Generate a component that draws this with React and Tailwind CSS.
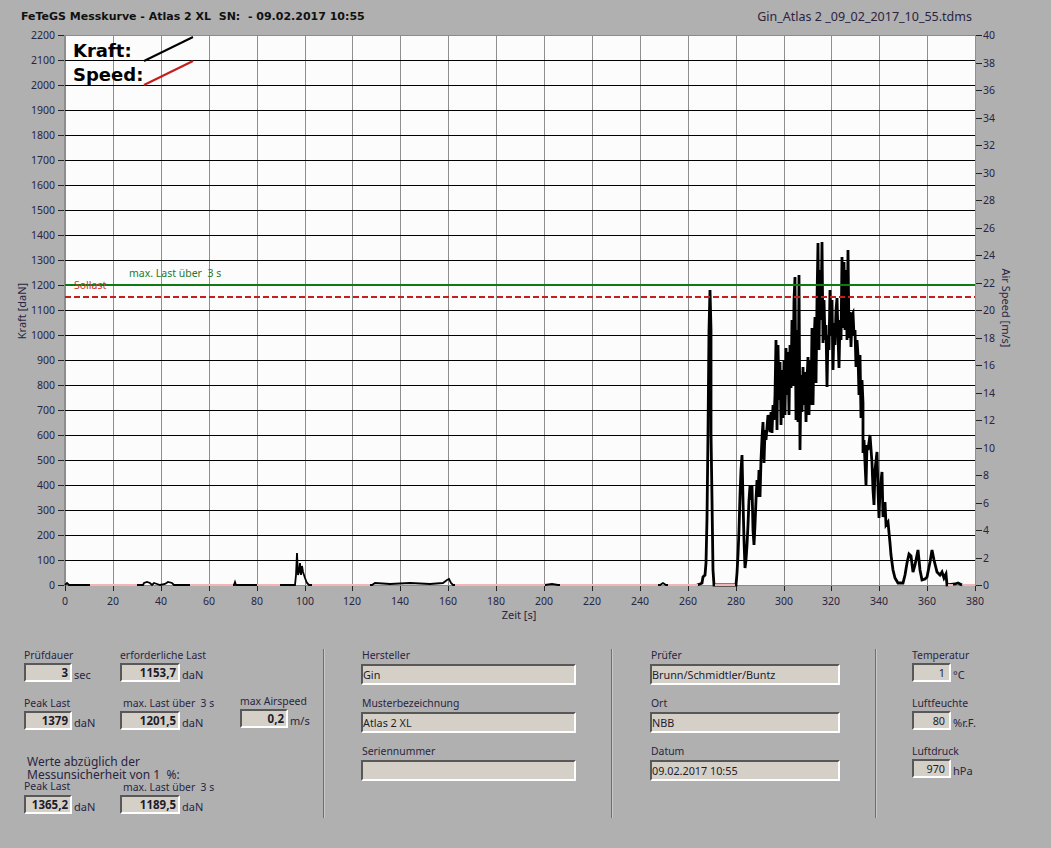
import React from 'react';

const X_LABELS = Array.from({ length: 20 }, (_, i) => i * 20);
const KRAFT_LABELS = Array.from({ length: 23 }, (_, i) => i * 100);
const SPEED_LABELS = Array.from({ length: 21 }, (_, i) => i * 2);

const xPos = (i) => Math.round(65 + i * 47.9);
const kraftY = (v) => 585 - v * 0.25;
const speedY = (v) => 585 - v * 13.75;

// traced from the measurement curve, in page pixels
const LOW_CURVE = [
  [65, 585], [67, 583], [69, 585], [143, 585], [144, 583], [147, 582], [150, 583], [152, 585], [154, 583], [157, 584], [160, 585],
  [165, 584], [168, 582], [172, 583], [174, 585], [234, 585], [235, 582], [236, 585], [295, 585], [296, 575], [297, 553], [298, 575],
  [299, 572], [300, 563], [301, 575], [302, 566], [303, 572], [305, 578], [307, 583], [309, 585], [372, 585], [375, 583], [390, 584],
  [410, 583], [430, 584], [443, 583], [447, 580], [449, 579], [451, 583], [453, 585], [545, 585], [552, 584], [558, 585], [660, 585], [663, 583],
  [666, 585], [697, 585],
];
const MAIN_CURVE = [
  [697, 585], [700, 584], [702, 583], [703, 577], [705, 575], [706, 563], [707, 518], [708, 433], [709, 330], [710, 290], [711, 330],
  [711, 433], [712, 500], [713, 570], [714, 585], [736, 585], [737, 573], [738, 555], [739, 530], [740, 495], [741, 470], [742, 455], [743, 500],
  [744, 540], [745, 568], [746, 560], [747, 545], [748, 525], [749, 500], [750, 486], [751, 500], [752, 486], [753, 530], [754, 545], [755, 525],
  [756, 500], [757, 480], [758, 497], [759, 470], [760, 497], [761, 460], [762, 438], [763, 422], [764, 463], [765, 430], [766, 440], [768, 415],
  [769, 425], [770, 432], [771, 412], [772, 433], [773, 405], [774, 420], [775, 395], [776, 340], [777, 430], [778, 345], [779, 400], [780, 362],
  [781, 425], [782, 370], [783, 418], [784, 360], [785, 415], [786, 348], [787, 395], [788, 352], [789, 415], [790, 345], [791, 388], [792, 320],
  [793, 385], [794, 300], [795, 277], [796, 420], [797, 330], [798, 422], [799, 275], [800, 450], [801, 375], [802, 412], [803, 367], [804, 405], [805, 372],
  [806, 422], [807, 380], [808, 357], [809, 415], [810, 360], [811, 405], [812, 328], [813, 405], [814, 345], [815, 317], [816, 383], [817, 300],
  [818, 243], [819, 350], [820, 270], [821, 320], [822, 242], [823, 343], [824, 300], [825, 340], [826, 325], [827, 387], [828, 335], [829, 350],
  [830, 290], [831, 335], [832, 300], [833, 370], [834, 323], [835, 345], [836, 310], [837, 298], [838, 335], [839, 368], [840, 320], [841, 340],
  [842, 257], [843, 328], [844, 262], [845, 330], [846, 270], [847, 340], [848, 250], [849, 338], [850, 312], [851, 347], [852, 315], [853, 313],
  [854, 335], [855, 330], [856, 367], [857, 340], [858, 355], [859, 395], [860, 355], [861, 418], [862, 380], [863, 403], [863, 453], [864, 440],
  [866, 485], [867, 445], [868, 450], [870, 435], [872, 463], [873, 490], [874, 505], [875, 470], [877, 452], [878, 490], [879, 518], [880, 490],
  [882, 472], [883, 517], [885, 502], [886, 525], [888, 522], [890, 543], [891, 555], [893, 570], [895, 578], [898, 583], [903, 583], [905, 575], [907, 563],
  [909, 554], [911, 556], [913, 572], [915, 565], [918, 550], [920, 570], [922, 580], [925, 579], [927, 577], [930, 562], [932, 550], [934, 560], [937, 572],
  [940, 575], [942, 572], [944, 578], [946, 574], [947, 585], [955, 584], [958, 583], [962, 585],
];

// stretches where the pink zero line shows instead of the black curve
const PINK_SPANS = [[90, 137], [190, 233], [257, 280], [312, 370], [455, 545], [560, 658], [668, 698], [715, 735], [948, 953], [963, 975]];

const toPoints = (list) => list.map((p) => p.join(',')).join(' ');

function Chart() {
  return (
    <svg viewBox="0 24 1051 606" className="block w-[1051px] h-[606px]">
      <rect x="64.5" y="35.5" width="911" height="550" fill="#fcfcfc" stroke="#8c8c8c" />
      {X_LABELS.map((v, i) => (
        <g key={v}>
          <line x1={xPos(i) + 0.5} x2={xPos(i) + 0.5} y1="36" y2="585" stroke="#8f8f8f" />
          <line x1={xPos(i) + 0.5} x2={xPos(i) + 0.5} y1="586" y2="591" stroke="#222" />
          <text x={xPos(i)} y="605" textAnchor="middle" fontSize="10.5" fill="#2a2440">{v}</text>
        </g>
      ))}
      {KRAFT_LABELS.map((v) => (
        <g key={v}>
          {v > 0 && v < 2200 && <line x1="65" x2="975" y1={kraftY(v) + 0.5} y2={kraftY(v) + 0.5} stroke="#000" />}
          <line x1="58" x2="64" y1={kraftY(v) + 0.5} y2={kraftY(v) + 0.5} stroke="#222" />
          <text x="55" y={kraftY(v) + 4} textAnchor="end" fontSize="10.5" fill="#2a2440">{v}</text>
        </g>
      ))}
      {SPEED_LABELS.map((v) => (
        <g key={v}>
          <line x1="976" x2="982" y1={Math.round(speedY(v)) + 0.5} y2={Math.round(speedY(v)) + 0.5} stroke="#222" />
          <text x="983" y={speedY(v) + 4} fontSize="10.5" fill="#2a2440">{v}</text>
        </g>
      ))}
      <polyline points={toPoints(LOW_CURVE)} fill="none" stroke="#000" strokeWidth="1.8" />
      <polyline points={toPoints(MAIN_CURVE)} fill="none" stroke="#000" strokeWidth="2.8" />
      {PINK_SPANS.map(([from, to]) => (
        <line key={from} x1={from} x2={to} y1="585" y2="585" stroke="#f3b6b6" strokeWidth="2" />
      ))}
      <line x1="65" x2="975" y1="285" y2="285" stroke="#0f7a14" strokeWidth="2" />
      <line x1="65" x2="975" y1="297" y2="297" stroke="#c41e1e" strokeWidth="2" strokeDasharray="6 3" />
      <text x="129" y="277" fontSize="10.5" fill="#1f7a2a">{'max. Last über\u00a0\u00a03 s'}</text>
      <text x="74" y="289" fontSize="10.5" fill="#c0392b">Sollast</text>
      <text x="73" y="57" fontSize="18" fontWeight="700" fill="#000" className="font-['DejaVu_Sans',sans-serif]">Kraft:</text>
      <text x="73" y="81" fontSize="18" fontWeight="700" fill="#000" className="font-['DejaVu_Sans',sans-serif]">Speed:</text>
      <line x1="144" y1="61" x2="193" y2="37" stroke="#000" strokeWidth="2" />
      <line x1="144" y1="85" x2="193" y2="61" stroke="#c41e1e" strokeWidth="2.2" />
      <text transform="translate(26 311) rotate(-90)" textAnchor="middle" fontSize="11" fill="#2a2440">Kraft [daN]</text>
      <text transform="translate(1002 308) rotate(90)" textAnchor="middle" fontSize="11" fill="#2a2440">Air Speed [m/s]</text>
      <text x="519" y="619" textAnchor="middle" fontSize="11" fill="#2a2440">Zeit [s]</text>
    </svg>
  );
}

function Field({ value, bold, className }) {
  return (
    <div
      className={`h-[19px] shrink-0 border-2 border-t-[#585858] border-l-[#585858] border-r-white border-b-white bg-[#d4d0c8] text-[10.8px] leading-[15px] text-[#1c1c2c] whitespace-pre ${bold ? 'font-bold text-[11.5px] text-right pr-[2px]' : ''} ${className}`}
    >
      {value}
    </div>
  );
}

function Stat({ label, value, unit, labelClass = '', fieldClass = 'w-[48px]', bold = true, className = '' }) {
  return (
    <div className={className}>
      <div className={`text-[10.4px] leading-[13px] whitespace-pre ${labelClass}`}>{label}</div>
      <div className="flex items-end mt-[1px]">
        <Field value={value} bold={bold} className={`${fieldClass} ${bold ? '' : 'text-right pr-[4px]'}`} />
        <span className="ml-[2px] text-[11px] leading-[14px]">{unit}</span>
      </div>
    </div>
  );
}

function TextBlock({ label, value, className }) {
  return (
    <div className="mb-[11px]">
      <div className="text-[10.4px] leading-[14px] whitespace-pre ml-[1px]">{label}</div>
      <Field value={value} className={`mt-[2px] h-[21px] leading-[17px] ${className}`} />
    </div>
  );
}

function Divider() {
  return <div className="w-[2px] h-[169px] shrink-0 border-l border-l-[#6e6e6e] bg-[#c8c8c8]" />;
}

export default function App() {
  return (
    <div className="w-[1051px] h-[848px] overflow-hidden bg-[#b0b0b0] text-[#2a2440] font-['Noto_Sans',sans-serif]">
      <div className="flex justify-between items-center h-[24px] pl-[21px] pr-[79px] pt-[10px]">
        <div className="text-[11px] font-bold text-[#111] whitespace-pre font-['DejaVu_Sans',sans-serif]">FeTeGS Messkurve - Atlas 2 XL  SN:  - 09.02.2017 10:55</div>
        <div className="text-[12.5px] whitespace-pre">Gin_Atlas 2 _09_02_2017_10_55.tdms</div>
      </div>
      <Chart />
      <div className="flex pt-[19px] pl-[24px]">
        <div className="w-[299px] shrink-0">
          <div className="flex">
            <Stat label="Prüfdauer" value="3" unit="sec" className="w-[96px]" />
            <Stat label="erforderliche Last" value="1153,7" unit="daN" fieldClass="w-[60px]" />
          </div>
          <div className="flex mt-[13px] items-end">
            <Stat label="Peak Last" value="1379" unit="daN" className="w-[96px]" />
            <Stat label="max. Last über  3 s" value="1201,5" unit="daN" fieldClass="w-[60px]" labelClass="ml-[3px]" className="w-[120px]" />
            <Stat label="max Airspeed" value="0,2" unit="m/s" className="mb-[2px]" />
          </div>
          <div className="mt-[25px] ml-[3px] text-[12px] leading-[13px]">
            <div>Werte abzüglich der</div>
            <div className="whitespace-pre">Messunsicherheit von 1  %:</div>
          </div>
          <div className="flex items-end -mt-[1px]">
            <Stat label="Peak Last" value="1365,2" unit="daN" labelClass="mb-[2px]" className="w-[96px]" />
            <Stat label="max. Last über  3 s" value="1189,5" unit="daN" fieldClass="w-[60px]" labelClass="ml-[3px]" />
          </div>
        </div>
        <Divider />
        <div className="w-[286px] shrink-0 pl-[36px] -mt-[1px]">
          <TextBlock label="Hersteller" value="Gin" className="w-[215px]" />
          <TextBlock label="Musterbezeichnung" value="Atlas 2 XL" className="w-[215px]" />
          <TextBlock label="Seriennummer" value="" className="w-[215px]" />
        </div>
        <Divider />
        <div className="w-[262px] shrink-0 pl-[37px] -mt-[1px]">
          <TextBlock label="Prüfer" value="Brunn/Schmidtler/Buntz" className="w-[190px]" />
          <TextBlock label="Ort" value="NBB" className="w-[190px]" />
          <TextBlock label="Datum" value="09.02.2017 10:55" className="w-[190px]" />
        </div>
        <Divider />
        <div className="pl-[35px] flex flex-col gap-[15px]">
          <Stat label="Temperatur" value="1" unit="°C" fieldClass="w-[39px]" bold={false} />
          <Stat label="Luftfeuchte" value="80" unit="%r.F." fieldClass="w-[39px]" bold={false} />
          <Stat label="Luftdruck" value="970" unit="hPa" fieldClass="w-[39px]" bold={false} />
        </div>
      </div>
    </div>
  );
}
